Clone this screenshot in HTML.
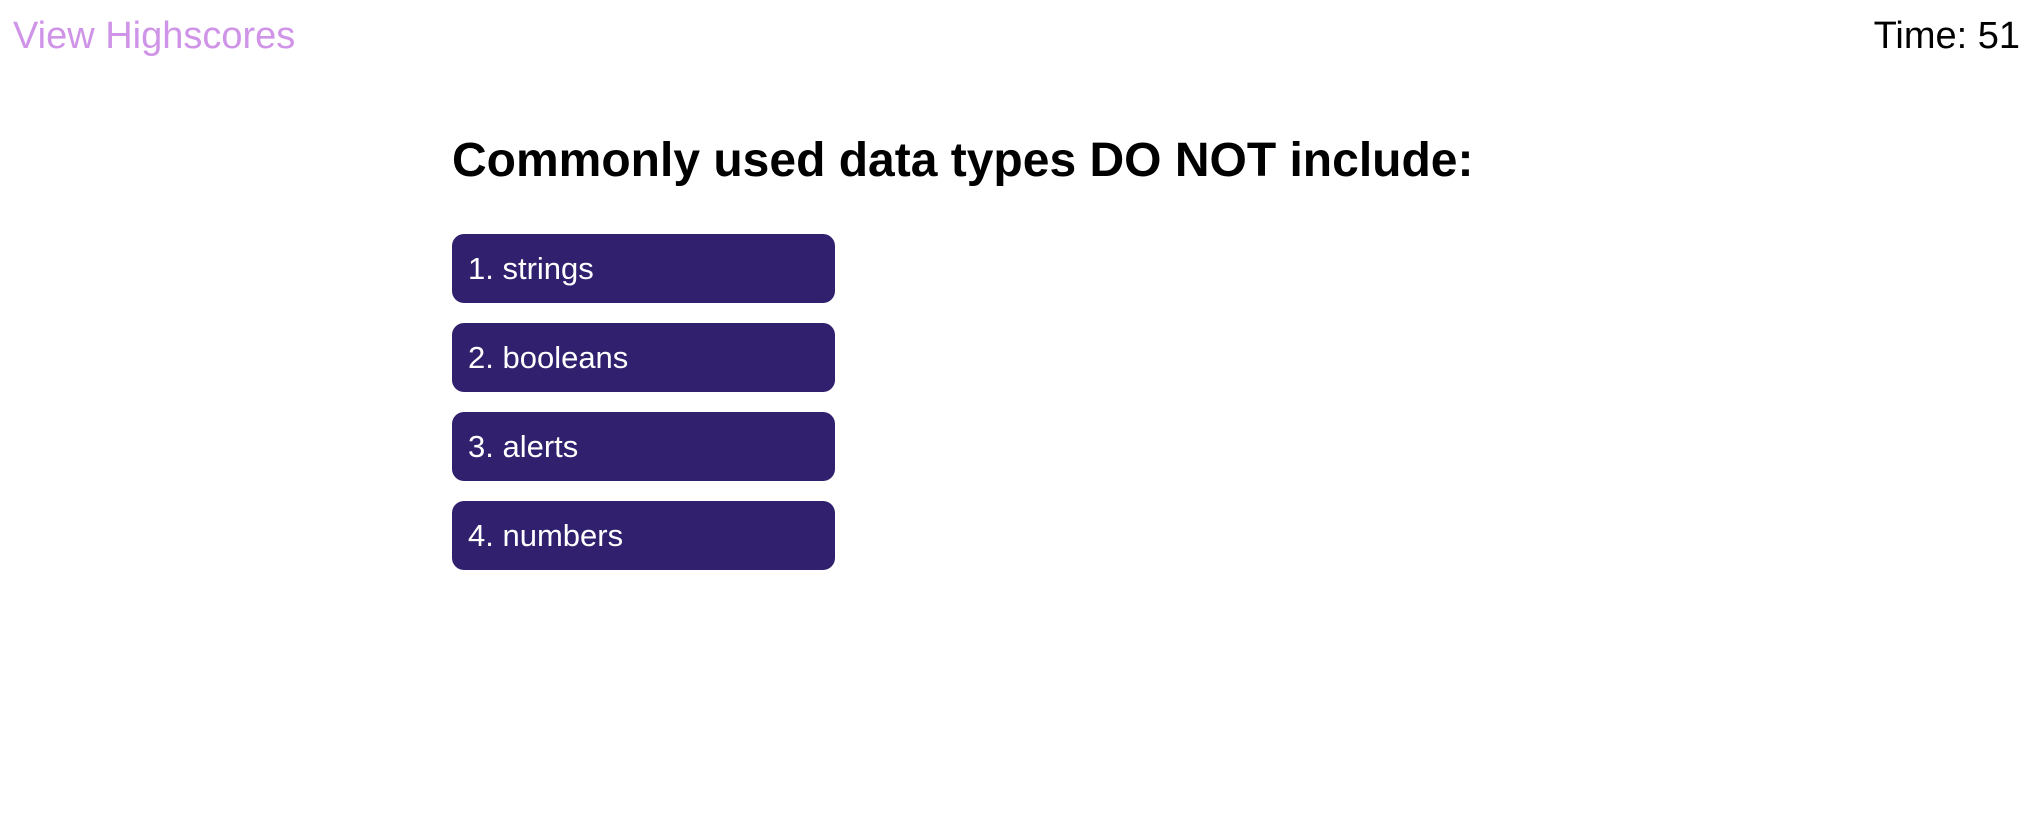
<!DOCTYPE html>
<html><head><meta charset="utf-8"><style>
html,body{margin:0;padding:0;background:#fff;width:2034px;height:826px;overflow:hidden;font-family:"Liberation Sans",Arial,sans-serif;}
.hs{position:absolute;left:13px;top:14px;font-size:38px;color:#cf94e8;line-height:44px;}
.time{position:absolute;right:14px;top:14px;font-size:38px;color:#000;line-height:44px;}
h1{position:absolute;left:452px;top:131px;margin:0;font-size:48px;font-weight:bold;line-height:60px;white-space:nowrap;}
.btn{position:absolute;left:452px;width:383px;height:69px;background:#31206e;border-radius:12px;color:#fff;font-size:31px;line-height:69px;padding-left:16px;box-sizing:border-box;}
</style></head><body>
<div class="hs">View Highscores</div>
<div class="time">Time: 51</div>
<h1>Commonly used data types DO NOT include:</h1>
<div class="btn" style="top:234px">1. strings</div>
<div class="btn" style="top:323px">2. booleans</div>
<div class="btn" style="top:412px">3. alerts</div>
<div class="btn" style="top:501px">4. numbers</div>
</body></html>
